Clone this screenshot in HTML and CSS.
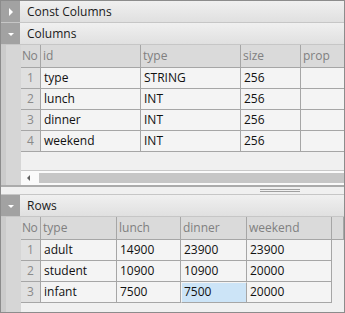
FILE: index.html
```
<!DOCTYPE html>
<html>
	<head>
		<meta charset="utf-8">
		<title>Table editor</title>
		<link rel="stylesheet" href="styles.css">
	</head>
	<body>
		<div class="frame">
			<div class="head">
				<div class="toggle"><span class="tri-right"></span></div>
				<div class="title">Const Columns</div>
			</div>
			<div class="head">
				<div class="toggle"><span class="tri-down"></span></div>
				<div class="title">Columns</div>
			</div>
			<div class="body cols-body">
				<div class="gutter"></div>
				<div class="content">
					<div class="grid cols">
						<div class="row hdr">
							<div class="c first">No</div><div class="c">id</div><div class="c">type</div><div class="c">size</div><div class="c">prop</div>
						</div>
						<div class="row">
							<div class="c no">1</div><div class="c">type</div><div class="c">STRING</div><div class="c">256</div><div class="c"></div>
						</div>
						<div class="row">
							<div class="c no">2</div><div class="c">lunch</div><div class="c">INT</div><div class="c">256</div><div class="c"></div>
						</div>
						<div class="row">
							<div class="c no">3</div><div class="c">dinner</div><div class="c">INT</div><div class="c">256</div><div class="c"></div>
						</div>
						<div class="row">
							<div class="c no">4</div><div class="c">weekend</div><div class="c">INT</div><div class="c">256</div><div class="c"></div>
						</div>
					</div>
					<div class="fill"></div>
					<div class="hscroll">
						<span class="arrow-left"></span>
						<div class="thumb"></div>
					</div>
				</div>
			</div>
			<div class="splitter"><div class="grip"></div></div>
			<div class="head">
				<div class="toggle"><span class="tri-down"></span></div>
				<div class="title">Rows</div>
			</div>
			<div class="body rows-body">
				<div class="gutter"></div>
				<div class="content">
					<div class="grid rows">
						<div class="row hdr">
							<div class="c first">No</div><div class="c">type</div><div class="c">lunch</div><div class="c">dinner</div><div class="c">weekend</div><div class="c"></div>
						</div>
						<div class="row">
							<div class="c no">1</div><div class="c">adult</div><div class="c">14900</div><div class="c">23900</div><div class="c">23900</div>
						</div>
						<div class="row">
							<div class="c no">2</div><div class="c">student</div><div class="c">10900</div><div class="c">10900</div><div class="c">20000</div>
						</div>
						<div class="row">
							<div class="c no">3</div><div class="c">infant</div><div class="c">7500</div><div class="c selected">7500</div><div class="c">20000</div>
						</div>
					</div>
				</div>
			</div>
		</div>
	</body>
</html>
```
FILE: styles.css
```
*{
	margin: 0;
	padding: 0;
	box-sizing: border-box;
}
body{
	background: #ffffff;
	font-family: "Open Sans", "Noto Sans", sans-serif;
	font-size: 12px;
	color: #111111;
}
.frame{
	width: 345px;
	height: 313px;
	border: 1px solid #8c8c8c;
	background: #f0f0f0;
	display: flex;
	flex-direction: column;
	overflow: hidden;
}

/* section headers */
.head{
	display: flex;
	height: 22px;
	flex: none;
	border-bottom: 1px solid #c6c6c6;
	background: linear-gradient(#f0f0f0, #e0e0e0);
}
.head .toggle{
	width: 19px;
	background: #a2a2a2;
	display: flex;
	align-items: center;
	justify-content: center;
}
.head .title{
	padding-left: 7px;
	line-height: 21px;
	color: #1a1a1a;
}
.tri-right{
	width: 0;
	height: 0;
	border-top: 4px solid transparent;
	border-bottom: 4px solid transparent;
	border-left: 4px solid #ffffff;
	margin-left: 1px;
}
.tri-down{
	width: 0;
	height: 0;
	border-left: 3px solid transparent;
	border-right: 3px solid transparent;
	border-top: 3px solid #ffffff;
	margin-top: 2px;
}

/* body with gutter */
.body{
	display: flex;
}
.cols-body{
	height: 140px;
	flex: none;
}
.rows-body{
	flex: 1;
}
.gutter{
	width: 20px;
	flex: none;
	background: #d6d6d6;
	border-left: 5px solid #cbcbcb;
}
.content{
	flex: 1;
	display: flex;
	flex-direction: column;
	background: #f0f0f0;
}
.fill{
	flex: 1;
}

/* grids */
.row{
	display: grid;
	height: 21px;
}
.row.hdr{
	height: 23px;
}
.cols .row{
	grid-template-columns: 20px 100px 100px 60px 43px;
}
.rows .row{
	grid-template-columns: 20px 76px 64px 66px 85px 12px;
}
.c{
	border-right: 1px solid #a6a6a6;
	border-bottom: 1px solid #a6a6a6;
	background: #f4f4f4;
	padding-left: 3px;
	line-height: 20px;
	white-space: nowrap;
	overflow: hidden;
}
.hdr .c{
	background: #dadada;
	color: #808080;
	line-height: 22px;
	padding-left: 2px;
}
.hdr .c.first{
	padding-left: 1px;
	letter-spacing: -0.5px;
}
.c.no{
	background: #e0e0e0;
	color: #8a8a8a;
	text-align: center;
	padding-left: 0;
}
.cols .c:last-child{
	border-right: none;
}
.c.selected{
	background: #cce4f7;
	border: 1px solid #f4f4f4;
	border-right-color: #a6a6a6;
	border-bottom-color: #a6a6a6;
	padding-left: 2px;
	line-height: 18px;
}

/* horizontal scrollbar */
.hscroll{
	height: 15px;
	border-top: 1px solid #c8c8c8;
	background: #fafafa;
	display: flex;
	align-items: center;
	padding-left: 6px;
}
.arrow-left{
	width: 0;
	height: 0;
	border-top: 3px solid transparent;
	border-bottom: 3px solid transparent;
	border-right: 3px solid #606060;
}
.thumb{
	flex: 1;
	height: 10px;
	margin-left: 9px;
	background: #c6c6c6;
}

/* splitter */
.splitter{
	height: 10px;
	flex: none;
	border-top: 2px solid #ababab;
	border-bottom: 1px solid #c6c6c6;
	background: #f0f0f0;
	display: flex;
	justify-content: flex-end;
	padding: 2px 44px 0 0;
}
.grip{
	width: 40px;
	height: 3px;
	border-top: 1px solid #a0a0a0;
	border-bottom: 1px solid #a0a0a0;
}
```
